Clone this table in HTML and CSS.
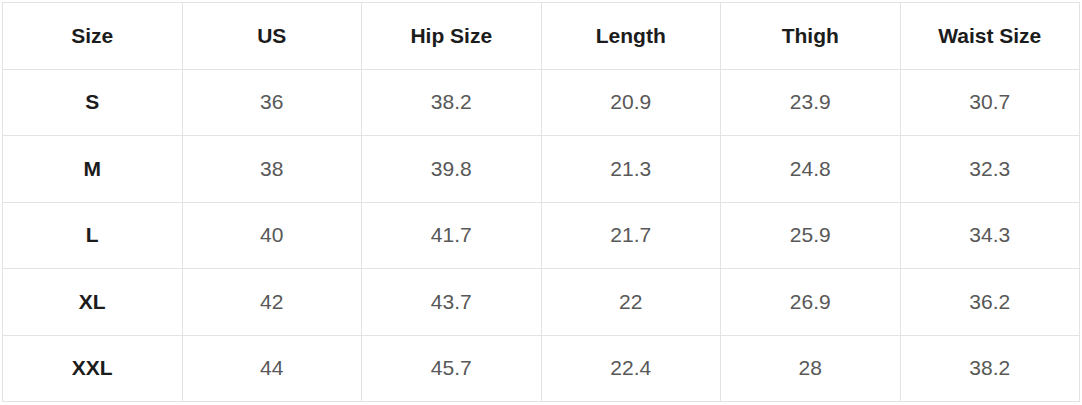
FILE: index.html
```html
<!DOCTYPE html>
<html>
<head>
<meta charset="utf-8">
<link rel="stylesheet" href="styles.css">
</head>
<body>
<table class="size-table">
  <thead>
    <tr><th>Size</th><th>US</th><th>Hip Size</th><th>Length</th><th>Thigh</th><th>Waist Size</th></tr>
  </thead>
  <tbody>
    <tr><th>S</th><td>36</td><td>38.2</td><td>20.9</td><td>23.9</td><td>30.7</td></tr>
    <tr><th>M</th><td>38</td><td>39.8</td><td>21.3</td><td>24.8</td><td>32.3</td></tr>
    <tr><th>L</th><td>40</td><td>41.7</td><td>21.7</td><td>25.9</td><td>34.3</td></tr>
    <tr><th>XL</th><td>42</td><td>43.7</td><td>22</td><td>26.9</td><td>36.2</td></tr>
    <tr><th>XXL</th><td>44</td><td>45.7</td><td>22.4</td><td>28</td><td>38.2</td></tr>
  </tbody>
</table>
</body>
</html>
```
FILE: styles.css
```css
html, body {
  margin: 0;
  padding: 0;
  background: #ffffff;
}
body {
  padding: 2px 2px 0 2px;
  font-family: "Liberation Sans", Arial, sans-serif;
}
.size-table {
  width: 1078px;
  border-collapse: collapse;
  table-layout: fixed;
}
.size-table tr {
  height: 66.5px;
}
.size-table th,
.size-table td {
  border: 1px solid #e3e3e3;
  text-align: center;
  vertical-align: middle;
  padding: 0;
  font-size: 21px;
}
.size-table th {
  font-weight: bold;
  color: #1c1c1c;
}
.size-table td {
  color: #585858;
}
```
